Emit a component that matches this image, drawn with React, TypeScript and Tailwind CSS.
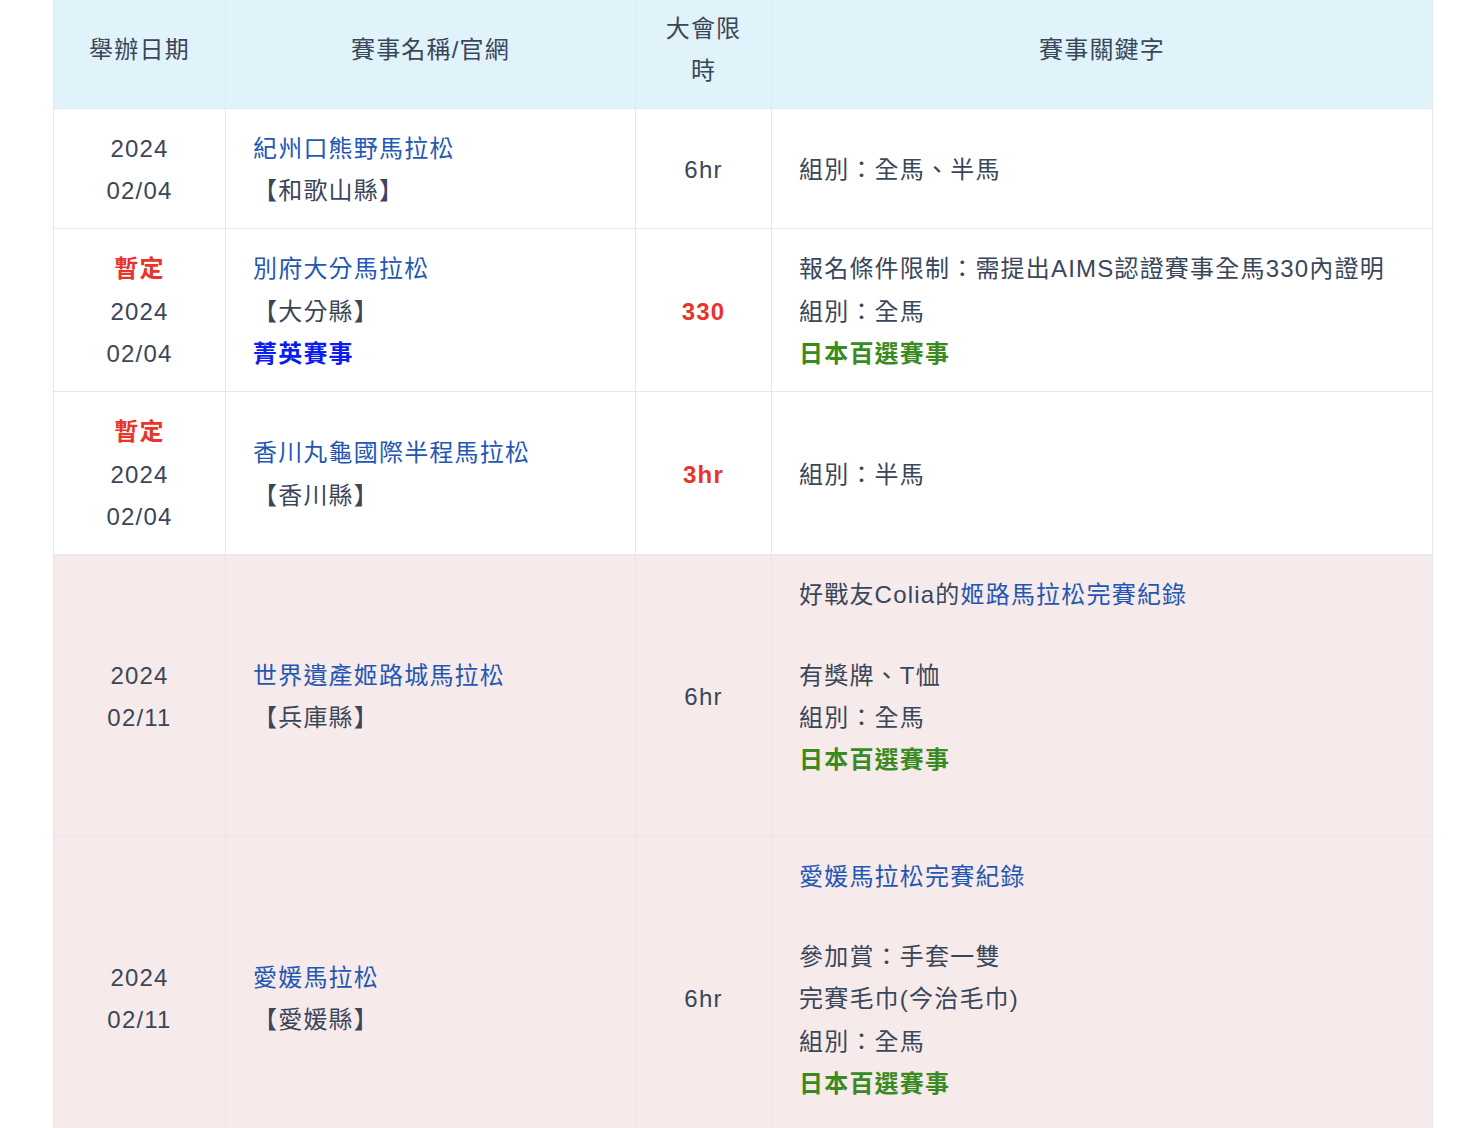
import React from 'react';

type Race = {
    tentative?: boolean;
    year: string;
    date: string;
    name: string;
    pref: string;
    elite?: boolean;
    limit: string;
    limitHot?: boolean;
    pink?: boolean;
    record?: { prefix?: string; link: string };
    lines: string[];
    hundred?: boolean;
};

// Marathon schedule rows
const RACES: Race[] = [
    { year: '2024', date: '02/04', name: '紀州口熊野馬拉松', pref: '【和歌山縣】', limit: '6hr', lines: ['組別：全馬、半馬'] },
    {
        tentative: true, year: '2024', date: '02/04', name: '別府大分馬拉松', pref: '【大分縣】', elite: true,
        limit: '330', limitHot: true, lines: ['報名條件限制：需提出AIMS認證賽事全馬330內證明', '組別：全馬'], hundred: true,
    },
    { tentative: true, year: '2024', date: '02/04', name: '香川丸龜國際半程馬拉松', pref: '【香川縣】', limit: '3hr', limitHot: true, lines: ['組別：半馬'] },
    {
        year: '2024', date: '02/11', name: '世界遺產姬路城馬拉松', pref: '【兵庫縣】', limit: '6hr', pink: true,
        record: { prefix: '好戰友Colia的', link: '姬路馬拉松完賽紀錄' }, lines: ['有獎牌、T恤', '組別：全馬'], hundred: true,
    },
    {
        year: '2024', date: '02/11', name: '愛媛馬拉松', pref: '【愛媛縣】', limit: '6hr', pink: true,
        record: { link: '愛媛馬拉松完賽紀錄' }, lines: ['參加賞：手套一雙', '完賽毛巾(今治毛巾)', '組別：全馬'], hundred: true,
    },
];

const App: React.FC = () => {
    return (
        <div className="min-h-screen bg-white font-['Liberation_Sans','Noto_Sans_CJK_TC',sans-serif] text-[24px] leading-[42.33px] tracking-[1.2px] text-[#3a4659]">
            <table className="ml-[53px] w-[1379px] table-fixed border-collapse">
                <colgroup>
                    <col className="w-[172px]" />
                    <col className="w-[410px]" />
                    <col className="w-[136px]" />
                    <col className="w-[661px]" />
                </colgroup>
                <thead>
                    <tr className="bg-[#e0f2fa]">
                        <th className="h-[108px] border border-[#e3e8ee] border-t-0 px-[27px] pt-[8px] pb-[15px] font-normal">舉辦日期</th>
                        <th className="h-[108px] border border-[#e3e8ee] border-t-0 px-[27px] pt-[8px] pb-[15px] font-normal">賽事名稱/官網</th>
                        <th className="h-[108px] border border-[#e3e8ee] border-t-0 px-[27px] pt-[8px] pb-[15px] font-normal">大會限時</th>
                        <th className="h-[108px] border border-[#e3e8ee] border-t-0 px-[27px] pt-[8px] pb-[15px] font-normal">賽事關鍵字</th>
                    </tr>
                </thead>
                <tbody>
                    {RACES.map((r, i) => (
                        <tr key={i} className={r.pink ? 'bg-[#f6eaeb]' : 'bg-white'}>
                            <td className="border border-[#e3e8ee] px-[20px] pt-[19px] pb-[16px] text-center align-middle">
                                {r.tentative && <div className="font-bold text-[#e8342a]">暫定</div>}
                                <div>{r.year}</div>
                                <div>{r.date}</div>
                            </td>
                            <td className="border border-[#e3e8ee] px-[27px] pt-[19px] pb-[16px] align-middle">
                                <div className="text-[#2457b4]">{r.name}</div>
                                <div>{r.pref}</div>
                                {r.elite && <div className="font-bold text-[#0a1cf0]">菁英賽事</div>}
                            </td>
                            <td className={`border border-[#e3e8ee] px-[10px] pt-[19px] pb-[16px] text-center align-middle ${r.limitHot ? 'font-bold text-[#e8342a]' : ''}`}>
                                {r.limit}
                            </td>
                            <td className="border border-[#e3e8ee] px-[27px] pt-[19px] pb-[16px] align-middle">
                                {r.record && (
                                    <p className="mb-[38px]">
                                        {r.record.prefix}
                                        <span className="text-[#2457b4]">{r.record.link}</span>
                                    </p>
                                )}
                                <div className={r.record ? 'mb-[38px]' : ''}>
                                    {r.lines.map((l, j) => (
                                        <div key={j}>{l}</div>
                                    ))}
                                    {r.hundred && <div className="font-bold text-[#3a8a22]">日本百選賽事</div>}
                                </div>
                            </td>
                        </tr>
                    ))}
                </tbody>
            </table>
        </div>
    );
};

export default App;
